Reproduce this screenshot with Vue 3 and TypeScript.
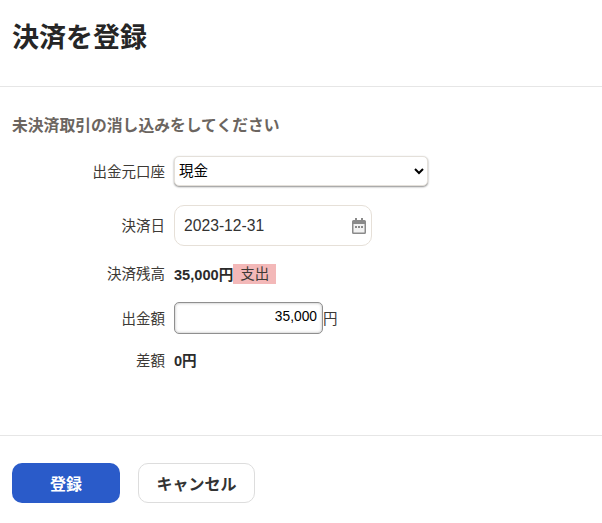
<script setup lang="ts">
const account = '現金'
const accounts: string[] = ['現金']
</script>

<template>
  <div class="page">
    <header class="head"><h1>決済を登録</h1></header>
    <main class="body">
      <h2>未決済取引の消し込みをしてください</h2>
      <div class="form">
        <div class="row r-select">
          <label>出金元口座</label>
          <select class="select" :value="account">
            <option v-for="a in accounts" :key="a">{{ a }}</option>
          </select>
        </div>
        <div class="row r-date">
          <label>決済日</label>
          <div class="date">
            <span>2023-12-31</span>
            <svg class="cal" width="14" height="16" viewBox="0 0 14 16">
              <path fill="#8a8a8a" d="M3 0h2v2h4V0h2v2h1.5A1.5 1.5 0 0 1 14 3.500V14.500A1.500 1.500 0 0 1 12.500 16h-11A1.500 1.500 0 0 1 0 14.500V3.500A1.500 1.500 0 0 1 1.500 2H3z"/>
              <rect x="1.500" y="6" width="11" height="8.500" fill="#f2f2f2"/>
              <rect x="3" y="8" width="2" height="2" fill="#8a8a8a"/>
              <rect x="6" y="8" width="2" height="2" fill="#8a8a8a"/>
              <rect x="9" y="8" width="2" height="2" fill="#8a8a8a"/>
            </svg>
          </div>
        </div>
        <div class="row r-balance">
          <label>決済残高</label>
          <strong>35,000円</strong><span class="tag">支出</span>
        </div>
        <div class="row r-amount">
          <label>出金額</label>
          <input class="amount" value="35,000" />
          <span class="unit">円</span>
        </div>
        <div class="row r-diff">
          <label>差額</label>
          <strong>0円</strong>
        </div>
      </div>
    </main>
    <footer class="foot">
      <button class="btn primary">登録</button>
      <button class="btn ghost">キャンセル</button>
    </footer>
  </div>
</template>

<style scoped>
.page {
  width: 602px;
  height: 523px;
  background: #fff;
  color: #2b2b2b;
  font-family: "Liberation Sans", "Noto Sans CJK JP", sans-serif;
  font-size: 14px;
  box-sizing: border-box;
}
.head {
  height: 87px;
  box-sizing: border-box;
  border-bottom: 1px solid #e6e6e6;
  padding: 20px 12px 0;
}
h1 {
  margin: 0;
  font-size: 27px;
  line-height: 36px;
  font-weight: 700;
  color: #262626;
}
.body {
  height: 348px;
  box-sizing: border-box;
  padding: 28px 12px 0;
}
h2 {
  margin: 0;
  font-size: 15.800px;
  line-height: 22px;
  font-weight: 700;
  color: #6b6560;
}
.form {
  margin-top: 19px;
  display: flex;
  flex-direction: column;
}
.row {
  display: flex;
  align-items: center;
}
label {
  width: 153px;
  flex: none;
  margin-right: 9px;
  padding-bottom: 2px;
  text-align: right;
  color: #3d3a36;
  font-size: 14.500px;
}
.r-select { height: 30px; }
.r-date { height: 41px; margin-top: 19px; }
.r-balance { height: 21px; margin-top: 17px; }
.r-amount { height: 32px; margin-top: 18px; }
.r-diff { height: 20px; margin-top: 16px; }
.select {
  width: 254px;
  height: 30px;
  box-sizing: border-box;
  border: 1px solid #e4e0da;
  border-radius: 5px;
  background-color: #fff;
  box-shadow: 0 1px 2px rgba(0, 0, 0, 0.45);
  font-family: inherit;
  font-size: 14.500px;
  color: #000;
  padding: 0;
}
.date {
  width: 198px;
  height: 41px;
  box-sizing: border-box;
  border: 1px solid #e6e0d8;
  border-radius: 10px;
  padding: 0 5px 0 9px;
  display: flex;
  align-items: center;
  justify-content: space-between;
  font-size: 15.700px;
  color: #333;
}
strong { font-size: 14.600px; font-weight: 700; color: #2b2b2b; padding-bottom: 1px; }
.tag {
  background: #f3b8b8;
  color: #3d3a36;
  padding: 0 7px;
  line-height: 20px;
  font-size: 14.500px;
}
.amount {
  width: 149px;
  height: 32px;
  box-sizing: border-box;
  border: 1px solid #8f8f8f;
  border-radius: 5px;
  box-shadow: inset 0 0 3px rgba(0, 0, 0, 0.3);
  text-align: right;
  padding: 0 5px 3px 0;
  font-family: inherit;
  font-size: 13.800px;
  color: #000;
  outline: none;
}
.unit { font-size: 14.500px; color: #3d3a36; padding-bottom: 2px; }
.foot {
  border-top: 1px solid #e6e6e6;
  padding: 27px 12px 0;
  display: flex;
  gap: 18px;
}
.btn {
  height: 40px;
  box-sizing: border-box;
  border-radius: 10px;
  font-family: inherit;
  font-weight: 700;
  padding: 0;
}
.primary {
  width: 108px;
  background: #2a5bc9;
  border: 0;
  color: #fff;
  font-size: 16px;
}
.ghost {
  width: 117px;
  background: #fff;
  border: 1px solid #ddd;
  color: #333;
  font-size: 16px;
}
</style>
